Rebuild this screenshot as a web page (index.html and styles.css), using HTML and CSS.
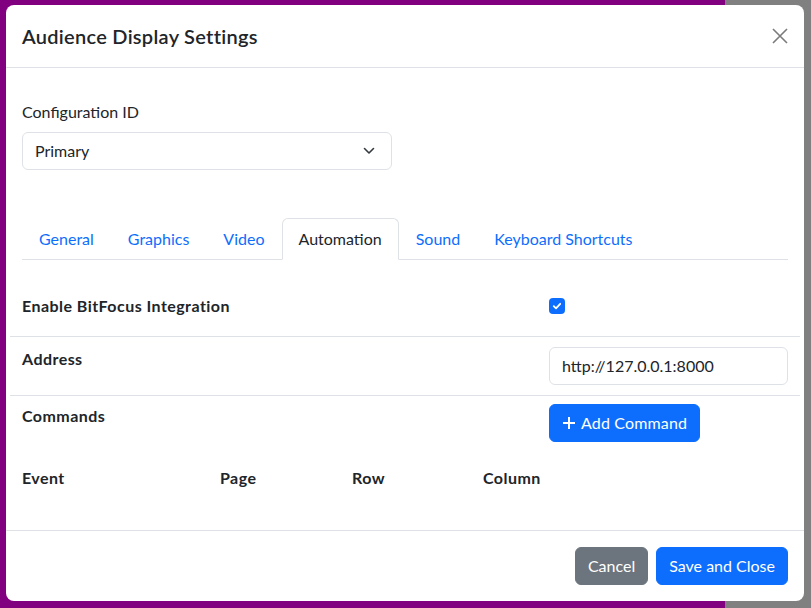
FILE: index.html
```html
<!DOCTYPE html>
<html lang="en">
<head>
    <meta charset="UTF-8">
    <meta name="viewport" content="width=device-width, initial-scale=1.0">
    <title>Audience Display Settings</title>
    <link rel="stylesheet" href="styles.css">
</head>
<body>
    <div class="stage"></div>
    <div class="stage-side"></div>

    <div class="modal">
        <div class="modal-header">
            <h5 class="modal-title">Audience Display Settings</h5>
            <button class="btn-close" aria-label="Close">
                <svg width="16" height="16" viewBox="0 0 16 16">
                    <path d="M1 1 L15 15 M15 1 L1 15" stroke="#7b7b7b" stroke-width="1.6" fill="none"/>
                </svg>
            </button>
        </div>

        <div class="modal-body">
            <div class="form-group">
                <label class="form-label">Configuration ID</label>
                <div class="form-select">
                    <span>Primary</span>
                    <svg width="12" height="8" viewBox="0 0 12 8">
                        <path d="M1.5 1.5 L6 6 L10.5 1.5" stroke="#343a40" stroke-width="1.6" fill="none" stroke-linecap="round" stroke-linejoin="round"/>
                    </svg>
                </div>
            </div>

            <ul class="nav-tabs">
                <li><a class="nav-link">General</a></li>
                <li><a class="nav-link">Graphics</a></li>
                <li><a class="nav-link">Video</a></li>
                <li><a class="nav-link active">Automation</a></li>
                <li><a class="nav-link">Sound</a></li>
                <li><a class="nav-link">Keyboard Shortcuts</a></li>
            </ul>

            <div class="tab-pane">
                <div class="setting-row first">
                    <div class="setting-label">Enable BitFocus Integration</div>
                    <div class="setting-value">
                        <span class="form-check">
                            <svg width="10" height="10" viewBox="0 0 10 10">
                                <path d="M1.8 5.2 L4 7.3 L8.2 2.8" stroke="#fff" stroke-width="1.8" fill="none" stroke-linecap="round" stroke-linejoin="round"/>
                            </svg>
                        </span>
                    </div>
                </div>
                <div class="setting-row address">
                    <div class="setting-label">Address</div>
                    <div class="setting-value">
                        <div class="form-control">http://127.0.0.1:8000</div>
                    </div>
                </div>
                <div class="setting-row commands">
                    <div class="setting-label">Commands</div>
                    <div class="setting-value">
                        <button class="btn btn-primary btn-add">
                            <svg width="14" height="14" viewBox="0 0 14 14">
                                <path d="M7 1 V13 M1 7 H13" stroke="#fff" stroke-width="2" fill="none"/>
                            </svg>
                            Add Command
                        </button>
                    </div>
                </div>

                <div class="command-table">
                    <div class="command-head">
                        <span>Event</span>
                        <span>Page</span>
                        <span>Row</span>
                        <span>Column</span>
                    </div>
                </div>
            </div>
        </div>

        <div class="modal-footer">
            <button class="btn btn-secondary">Cancel</button>
            <button class="btn btn-primary">Save and Close</button>
        </div>
    </div>
</body>
</html>
```

FILE: styles.css
```css
* {
    margin: 0;
    padding: 0;
    box-sizing: border-box;
}

body {
    display: flex;
    height: 100vh;
    font-family: 'Lato', 'Open Sans', sans-serif;
    font-size: 16px;
    line-height: 1.5;
    color: #212529;
    overflow: hidden;
}

/* page behind the dialog */
.stage {
    width: 725px;
    background: #800080;
}

.stage-side {
    flex: 1;
    background: #808080;
}

.modal {
    position: fixed;
    top: 5px;
    left: 6px;
    width: 798px;
    background: white;
    border-radius: 8px;
}

.modal-header {
    display: flex;
    align-items: center;
    justify-content: space-between;
    padding: 16px;
    border-bottom: 1px solid #dee2e6;
}

.modal-title {
    font-size: 20px;
    font-weight: 600;
    line-height: 30px;
    letter-spacing: 0.28px;
}

.btn-close {
    border: none;
    background: none;
    width: 24px;
    height: 24px;
    display: flex;
    align-items: center;
    justify-content: center;
    margin-right: -4px;
}

.modal-body {
    padding: 16px;
}

.form-group {
    padding-top: 16px;
}

.form-label {
    display: block;
    margin-bottom: 8px;
}

.form-select {
    width: 370px;
    height: 38px;
    border: 1px solid #dee2e6;
    border-radius: 6px;
    padding: 0 16px 0 12px;
    display: flex;
    align-items: center;
    justify-content: space-between;
}

.nav-tabs {
    list-style: none;
    display: flex;
    margin-top: 48px;
    border-bottom: 1px solid #dee2e6;
}

.nav-link {
    display: block;
    padding: 8px 16px;
    margin-bottom: -1px;
    border: 1px solid transparent;
    border-top-left-radius: 6px;
    border-top-right-radius: 6px;
    color: #0d6efd;
}

.nav-link.active {
    color: #212529;
    background: white;
    border-color: #dee2e6 #dee2e6 white;
}

.setting-row {
    display: grid;
    grid-template-columns: 527px 239px;
    margin: 0 -12px;
    padding: 0 12px;
    border-bottom: 1px solid #dee2e6;
}

.setting-row.first {
    padding-top: 34px;
    padding-bottom: 18px;
}

.setting-row.address {
    padding-top: 10px;
    padding-bottom: 10px;
}

.setting-row.commands {
    padding-top: 8px;
    border-bottom: none;
}

.setting-label {
    font-weight: 700;
    letter-spacing: 0.45px;
}

.setting-value {
    display: flex;
    align-items: center;
    align-self: start;
}

.form-check {
    width: 16px;
    height: 16px;
    margin-top: 4px;
    border-radius: 4px;
    background: #0d6efd;
    display: flex;
    align-items: center;
    justify-content: center;
}

.form-control {
    width: 100%;
    height: 38px;
    border: 1px solid #dee2e6;
    border-radius: 6px;
    padding: 6px 12px;
}

.btn {
    font-family: inherit;
    font-size: 16px;
    line-height: 24px;
    padding: 6px 12px;
    border: 1px solid transparent;
    border-radius: 6px;
    color: white;
}

.btn-primary {
    background: #0d6efd;
    border-color: #0d6efd;
}

.btn-secondary {
    background: #6c757d;
    border-color: #6c757d;
}

.btn-add {
    display: flex;
    align-items: center;
    gap: 5px;
    letter-spacing: 0.15px;
}

.command-table {
    margin-top: 16px;
    padding-bottom: 16px;
}

.command-head {
    display: grid;
    grid-template-columns: 198px 132px 131px 1fr;
    padding: 8px 0;
    font-weight: 700;
    letter-spacing: 0.45px;
}

.modal-footer {
    display: flex;
    justify-content: flex-end;
    padding: 12px;
    border-top: 1px solid #dee2e6;
}

.modal-footer .btn {
    margin: 4px;
}
```
